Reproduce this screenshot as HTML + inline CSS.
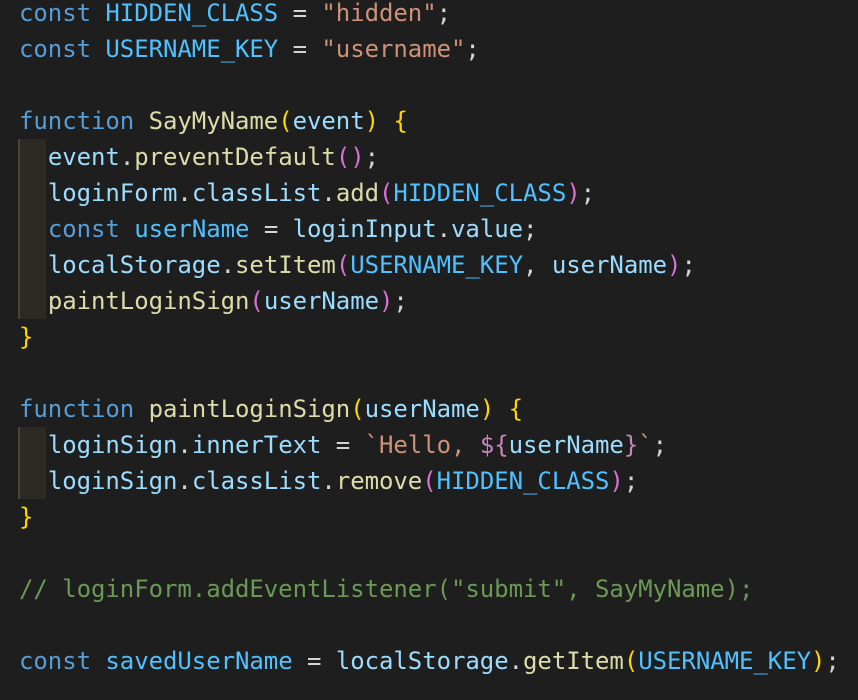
<!DOCTYPE html>
<html><head><style>
html,body{margin:0;padding:0;background:#1e1e1e;width:858px;height:700px;overflow:hidden}
.c{position:absolute;left:19px;top:-5px;font-family:"DejaVu Sans Mono","Liberation Mono",monospace;font-size:24px;line-height:36px;color:#d4d4d4}
.l{height:36px;white-space:pre;letter-spacing:-0.05px}
.g{position:absolute;left:18px;width:28px;background:#2b2b24;border-left:2px solid #45453b;box-sizing:border-box}
.k{color:#569cd6}.f{color:#dcdcaa}.v{color:#9cdcfe}.n{color:#4fc1ff}.s{color:#ce9178}.y{color:#ffd700}.p{color:#da70d6}.m{color:#c586c0}.cm{color:#6a9955}
</style></head><body>
<div class="g" style="top:139px;height:180px"></div>
<div class="g" style="top:427px;height:72px"></div>
<div class="c"><div class="l"><span class="k">const</span> <span class="n">HIDDEN_CLASS</span> = <span class="s">"hidden"</span>;</div><div class="l"><span class="k">const</span> <span class="n">USERNAME_KEY</span> = <span class="s">"username"</span>;</div><div class="l"> </div><div class="l"><span class="k">function</span> <span class="f">SayMyName</span><span class="y">(</span><span class="v">event</span><span class="y">)</span> <span class="y">{</span></div><div class="l">  <span class="v">event</span>.<span class="f">preventDefault</span><span class="p">()</span>;</div><div class="l">  <span class="v">loginForm</span>.<span class="v">classList</span>.<span class="f">add</span><span class="p">(</span><span class="n">HIDDEN_CLASS</span><span class="p">)</span>;</div><div class="l">  <span class="k">const</span> <span class="n">userName</span> = <span class="v">loginInput</span>.<span class="v">value</span>;</div><div class="l">  <span class="v">localStorage</span>.<span class="f">setItem</span><span class="p">(</span><span class="n">USERNAME_KEY</span>, <span class="v">userName</span><span class="p">)</span>;</div><div class="l">  <span class="f">paintLoginSign</span><span class="p">(</span><span class="v">userName</span><span class="p">)</span>;</div><div class="l"><span class="y">}</span></div><div class="l"> </div><div class="l"><span class="k">function</span> <span class="f">paintLoginSign</span><span class="y">(</span><span class="v">userName</span><span class="y">)</span> <span class="y">{</span></div><div class="l">  <span class="v">loginSign</span>.<span class="v">innerText</span> = <span class="s">`Hello, </span><span class="m">${</span><span class="v">userName</span><span class="m">}</span><span class="s">`</span>;</div><div class="l">  <span class="v">loginSign</span>.<span class="v">classList</span>.<span class="f">remove</span><span class="p">(</span><span class="n">HIDDEN_CLASS</span><span class="p">)</span>;</div><div class="l"><span class="y">}</span></div><div class="l"> </div><div class="l"><span class="cm">// loginForm.addEventListener("submit", SayMyName);</span></div><div class="l"> </div><div class="l"><span class="k">const</span> <span class="n">savedUserName</span> = <span class="v">localStorage</span>.<span class="f">getItem</span><span class="y">(</span><span class="n">USERNAME_KEY</span><span class="y">)</span>;</div></div>
</body></html>
